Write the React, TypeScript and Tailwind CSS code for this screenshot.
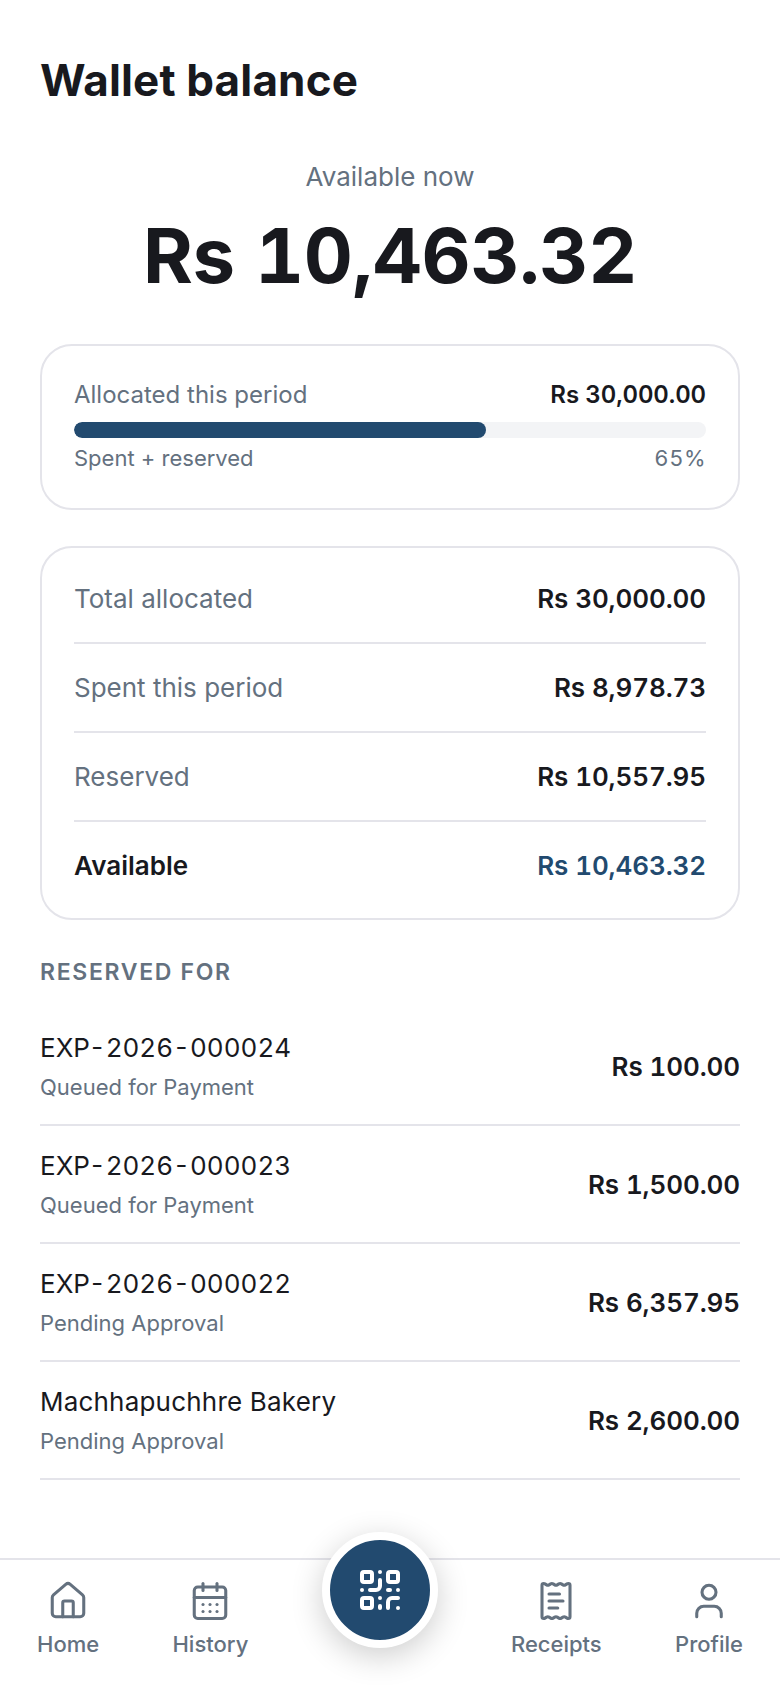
import React from "react";
import { House, CalendarDays, ReceiptText, User, QrCode } from "lucide-react";

const ICON = "w-[42px] h-[42px] text-[#64717f]";

function SummaryRow({ label, value, last, bold }: { label: string; value: string; last?: boolean; bold?: boolean }) {
  return (
    <div className={`flex items-center justify-between h-[89px] ${last ? "pb-[2px]" : "border-b-2 border-[#e4e4ea]"}`}>
      <span className={bold ? "text-[26px] font-semibold text-[#18191e]" : "text-[26px] text-[#64717f]"}>{label}</span>
      <span className={`text-[26px] font-semibold tabular-nums tracking-[-0.1px] ${bold ? "text-[#224a6f]" : "text-[#18191e]"}`}>{value}</span>
    </div>
  );
}

function ReservedRow({ title, sub, amount, code }: { title: string; sub: string; amount: string; code?: boolean }) {
  return (
    <div className="flex items-center justify-between h-[118px] border-b-2 border-[#e4e4ea]">
      <div className="flex flex-col gap-[6px]">
        <span className={`text-[26px] leading-[36px] text-[#18191e] ${code ? "tabular-nums" : "tracking-[0.2px]"}`}>{title}</span>
        <span className="text-[22px] leading-[30px] text-[#64717f]">{sub}</span>
      </div>
      <span className="text-[26px] font-semibold tabular-nums tracking-[-0.1px] text-[#18191e]">{amount}</span>
    </div>
  );
}

function NavItem({ icon, label }: { icon: React.ReactNode; label: string }) {
  return (
    <div className="flex flex-col items-center gap-[7px]">
      {icon}
      <span className="text-[22px] leading-[30px] font-medium text-[#64717f]">{label}</span>
    </div>
  );
}

export default function App() {
  return (
    <div className="w-[780px] h-[1688px] bg-white flex flex-col font-['Inter',sans-serif] overflow-hidden">
      <main className="flex-1 px-[40px] pt-[52px]">
        <h1 className="text-[44px] leading-[56px] font-bold text-[#18191e] tracking-[0.15px]">Wallet balance</h1>
        <div className="mt-[51px] flex flex-col items-center">
          <p className="text-[26px] leading-[36px] text-[#64717f]">Available now</p>
          <p className="mt-[12px] text-[76px] leading-[96px] font-bold tabular-nums tracking-[-0.3px] text-[#18191e]">Rs 10,463.32</p>
        </div>
        <section className="mt-[41px] h-[166px] rounded-[32px] border-2 border-[#e4e4ea] px-[32px] pt-[34px]">
          <div className="flex items-center justify-between h-[30px]">
            <span className="text-[24px] text-[#64717f]">Allocated this period</span>
            <span className="text-[24px] font-semibold tabular-nums tracking-[-0.1px] text-[#18191e]">Rs 30,000.00</span>
          </div>
          <div className="mt-[12px] h-[16px] rounded-full bg-[#f3f4f6] overflow-hidden">
            <div className="h-full w-[65.2%] rounded-full bg-[#224a6f]" />
          </div>
          <div className="mt-[6px] flex items-center justify-between h-[28px]">
            <span className="text-[22px] text-[#64717f]">Spent + reserved</span>
            <span className="text-[22px] text-[#64717f] tabular-nums tracking-[0.5px]">65%</span>
          </div>
        </section>
        <section className="mt-[36px] rounded-[32px] border-2 border-[#e4e4ea] px-[32px] pt-[7px] pb-[7px]">
          <SummaryRow label="Total allocated" value="Rs 30,000.00" />
          <SummaryRow label="Spent this period" value="Rs 8,978.73" />
          <SummaryRow label="Reserved" value="Rs 10,557.95" />
          <SummaryRow label="Available" value="Rs 10,463.32" last bold />
        </section>
        <h2 className="mt-[37px] text-[23px] leading-[30px] font-semibold tracking-[1.67px] text-[#64717f]">RESERVED FOR</h2>
        <div className="mt-[21px]">
          <ReservedRow code title="EXP-2026-000024" sub="Queued for Payment" amount="Rs 100.00" />
          <ReservedRow code title="EXP-2026-000023" sub="Queued for Payment" amount="Rs 1,500.00" />
          <ReservedRow code title="EXP-2026-000022" sub="Pending Approval" amount="Rs 6,357.95" />
          <ReservedRow title="Machhapuchhre Bakery" sub="Pending Approval" amount="Rs 2,600.00" />
        </div>
      </main>
      <nav className="relative h-[130px] border-t-2 border-[#e4e4ea] px-[37px] pt-[20px] flex justify-between items-start">
        <NavItem icon={<House className={ICON} strokeWidth={1.75} />} label="Home" />
        <NavItem icon={<CalendarDays className={ICON} strokeWidth={1.75} />} label="History" />
        <div className="relative w-[116px]">
          <div className="absolute left-0 -top-[48px] w-[116px] h-[116px] rounded-full bg-[#224a6f] border-[8px] border-white shadow-[0_8px_32px_rgba(0,0,0,0.2)] flex items-center justify-center">
            <QrCode className="w-[48px] h-[48px] text-white" strokeWidth={2} />
          </div>
        </div>
        <NavItem icon={<ReceiptText className={ICON} strokeWidth={1.75} />} label="Receipts" />
        <NavItem icon={<User className={ICON} strokeWidth={1.75} />} label="Profile" />
      </nav>
    </div>
  );
}
